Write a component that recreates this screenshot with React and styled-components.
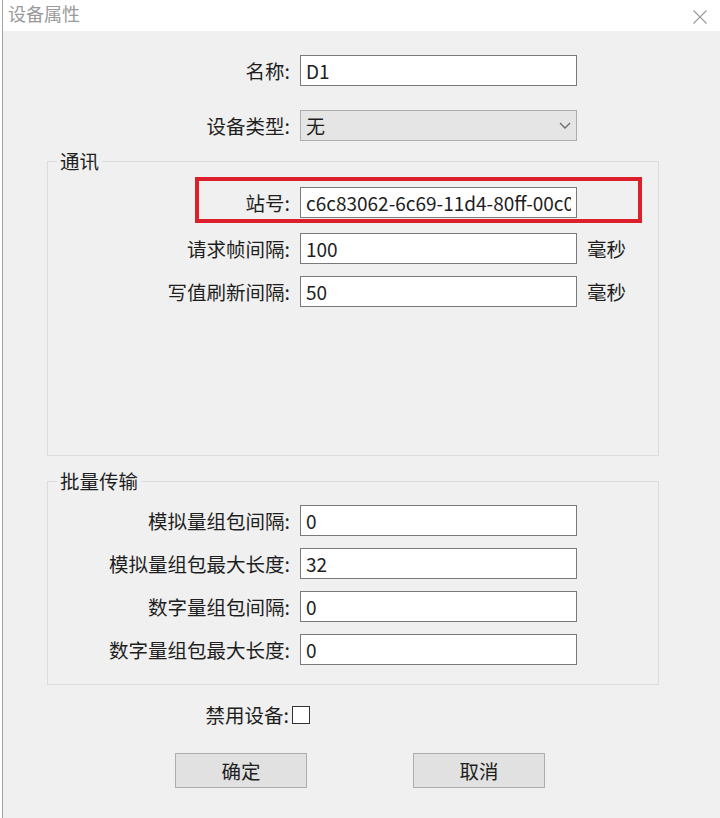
import React from 'react'
import styled, { createGlobalStyle } from 'styled-components'

const GlobalStyle = createGlobalStyle`
    html, body {
        margin: 0;
        padding: 0;
        background: #ffffff;
    }
    * {
        box-sizing: border-box;
    }
`

const Window = styled.div`
    display: flex;
    flex-direction: column;
    min-height: 100vh;
    margin-left: 2px;
    border-left: 1px solid #a3a3a3;
    font-family: "Noto Sans CJK SC", "Noto Sans", sans-serif;
    color: #1e1e1e;
`
const TitleBar = styled.div`
    display: flex;
    justify-content: space-between;
    align-items: flex-start;
    height: 31px;
    padding: 3px 12px 0 5px;
    background: #ffffff;
`
const Title = styled.div`
    font-size: 18px;
    line-height: 20px;
    color: #9a9a9a;
`
const Close = styled.div`
    width: 16px;
    height: 16px;
    margin-top: 3px;
`
const Body = styled.div`
    flex: 1;
    display: flex;
    flex-direction: column;
    padding-top: 24px;
    background: #f0f0f0;
`
const Row = styled.div`
    display: flex;
    align-items: center;
    height: ${props => props.h || 31}px;
    margin-top: ${props => props.mt || 0}px;
`
const Label = styled.label`
    width: ${props => props.w}px;
    padding-right: ${props => props.gap || 10}px;
    text-align: right;
    white-space: nowrap;
    font-size: 19.5px;
    line-height: 24px;
`
const Field = styled.div`
    display: flex;
    align-items: center;
    width: 277px;
    height: 31px;
    padding: 0 5px;
    border: 1px solid ${props => props.combo ? "#adadad" : "#7a7a7a"};
    background: ${props => props.combo ? "#e5e5e5" : "#ffffff"};
    font-size: 19px;
    white-space: nowrap;
    overflow: hidden;
`
const FieldText = styled.span`
    flex: 1;
    overflow: hidden;
`
const Unit = styled.span`
    margin-left: 10px;
    font-size: 19.5px;
`
const Group = styled.fieldset`
    width: 612px;
    min-width: 0;
    margin: ${props => props.mt}px 0 0 44px;
    padding: 0 0 ${props => props.pb}px;
    border: 1px solid #dcdcdc;
`
const Legend = styled.legend`
    margin-left: 9px;
    padding: 0 3px;
    font-size: 19.5px;
    line-height: 20px;
`
const Highlight = styled.div`
    width: 447px;
    margin: 6px 0 0 147px;
    padding: 6px 0 1px;
    border: 4px solid #dc1f2b;
`
const CheckBox = styled.span`
    display: inline-block;
    width: 18px;
    height: 18px;
    border: 1.5px solid #333333;
    background: #ffffff;
`
const ButtonRow = styled.div`
    display: flex;
    gap: 106px;
    margin-top: 29px;
    padding-left: 172px;
`
const Button = styled.button`
    width: 132px;
    height: 35px;
    border: 1px solid #adadad;
    background: #e1e1e1;
    font-family: inherit;
    font-size: 19.5px;
    color: #1e1e1e;
`

const FormRow = ({ label, value, w, mt, unit }) => (
    <Row mt={mt}>
        <Label w={w}>{label}:</Label>
        <Field><FieldText>{value}</FieldText></Field>
        {unit && <Unit>{unit}</Unit>}
    </Row>
)

const Chevron = () => (
    <svg width="12" height="7" viewBox="0 0 12 7">
        <path d="M1 1 L6 6 L11 1" fill="none" stroke="#6b6b6b" strokeWidth="1.3" />
    </svg>
)

const batch = [
    ['模拟量组包间隔', '0'],
    ['模拟量组包最大长度', '32'],
    ['数字量组包间隔', '0'],
    ['数字量组包最大长度', '0'],
]

export default function App() {
    return (
        <Window>
            <GlobalStyle />
            <TitleBar>
                <Title>设备属性</Title>
                <Close>
                    <svg width="16" height="16" viewBox="0 0 16 16">
                        <path d="M1.5 1.5 L14.5 14.5 M14.5 1.5 L1.5 14.5" stroke="#9a9a9a" strokeWidth="1.1" />
                    </svg>
                </Close>
            </TitleBar>
            <Body>
                <FormRow label="名称" value="D1" w={297} />
                <Row mt={24}>
                    <Label w={297}>设备类型:</Label>
                    <Field combo>
                        <FieldText>无</FieldText>
                        <Chevron />
                    </Field>
                </Row>

                <Group mt={10} pb={148}>
                    <Legend>通讯</Legend>
                    <Highlight>
                        <FormRow label="站号" value="c6c83062-6c69-11d4-80ff-00c0" w={101} />
                    </Highlight>
                    <FormRow label="请求帧间隔" value="100" w={252} mt={10} unit="毫秒" />
                    <FormRow label="写值刷新间隔" value="50" w={252} mt={12} unit="毫秒" />
                </Group>

                <Group mt={15} pb={19}>
                    <Legend>批量传输</Legend>
                    {batch.map(([label, value], i) => (
                        <FormRow key={label} label={label} value={value} w={252} mt={i === 0 ? 14 : 12} />
                    ))}
                </Group>

                <Row h={18} mt={21}>
                    <Label w={289} gap={3}>禁用设备:</Label>
                    <CheckBox />
                </Row>

                <ButtonRow>
                    <Button>确定</Button>
                    <Button>取消</Button>
                </ButtonRow>
            </Body>
        </Window>
    )
}
